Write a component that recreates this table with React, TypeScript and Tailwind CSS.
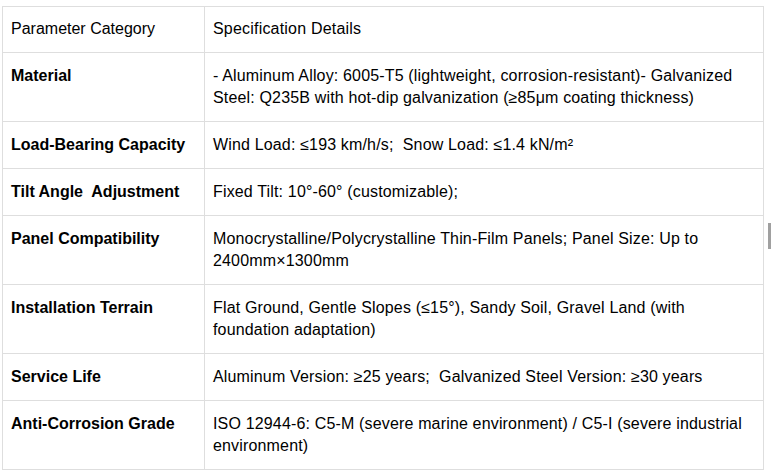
import React from 'react';

const rows: { label: string; value: string }[] = [
  {
    label: 'Material',
    value:
      '- Aluminum Alloy: 6005-T5 (lightweight, corrosion-resistant)- Galvanized Steel: Q235B with hot-dip galvanization (≥85μm coating thickness)',
  },
  { label: 'Load-Bearing Capacity', value: 'Wind Load: ≤193 km/h/s;\u00a0 Snow Load: ≤1.4 kN/m²' },
  { label: 'Tilt Angle\u00a0 Adjustment', value: 'Fixed Tilt: 10°-60° (customizable);' },
  {
    label: 'Panel Compatibility',
    value: 'Monocrystalline/Polycrystalline Thin-Film Panels; Panel Size: Up to 2400mm×1300mm',
  },
  {
    label: 'Installation Terrain',
    value: 'Flat Ground, Gentle Slopes (≤15°), Sandy Soil, Gravel Land (with foundation adaptation)',
  },
  { label: 'Service Life', value: 'Aluminum Version: ≥25 years;\u00a0 Galvanized Steel Version: ≥30 years' },
  {
    label: 'Anti-Corrosion Grade',
    value: 'ISO 12944-6: C5-M (severe marine environment) / C5-I (severe industrial environment)',
  },
];

export default function App() {
  return (
    <div className="relative w-[771px] h-[475px] bg-white overflow-hidden font-['Liberation_Sans',Arial,sans-serif] text-[16px] leading-[22px] text-black">
      <div className="pt-[6px] pl-[2px]">
        <table className="border-collapse w-[762px] table-fixed">
          <colgroup>
            <col className="w-[202px]" />
            <col />
          </colgroup>
          <thead>
            <tr>
              <th className="border border-[#dedede] px-[8px] pt-[11px] pb-[12px] text-left font-normal">
                Parameter Category
              </th>
              <th className="border border-[#dedede] px-[8px] pt-[11px] pb-[12px] text-left font-normal tracking-[0.2px]">
                Specification Details
              </th>
            </tr>
          </thead>
          <tbody>
            {rows.map((r) => (
              <tr key={r.label}>
                <td className="border border-[#dedede] px-[8px] py-[12px] align-top font-bold">{r.label}</td>
                <td className="border border-[#dedede] px-[8px] py-[12px] align-top tracking-[0.16px]">{r.value}</td>
              </tr>
            ))}
          </tbody>
        </table>
      </div>
      <div className="absolute left-[768px] top-[223px] w-[3px] h-[26px] bg-[#a0a0a0]" />
    </div>
  );
}
